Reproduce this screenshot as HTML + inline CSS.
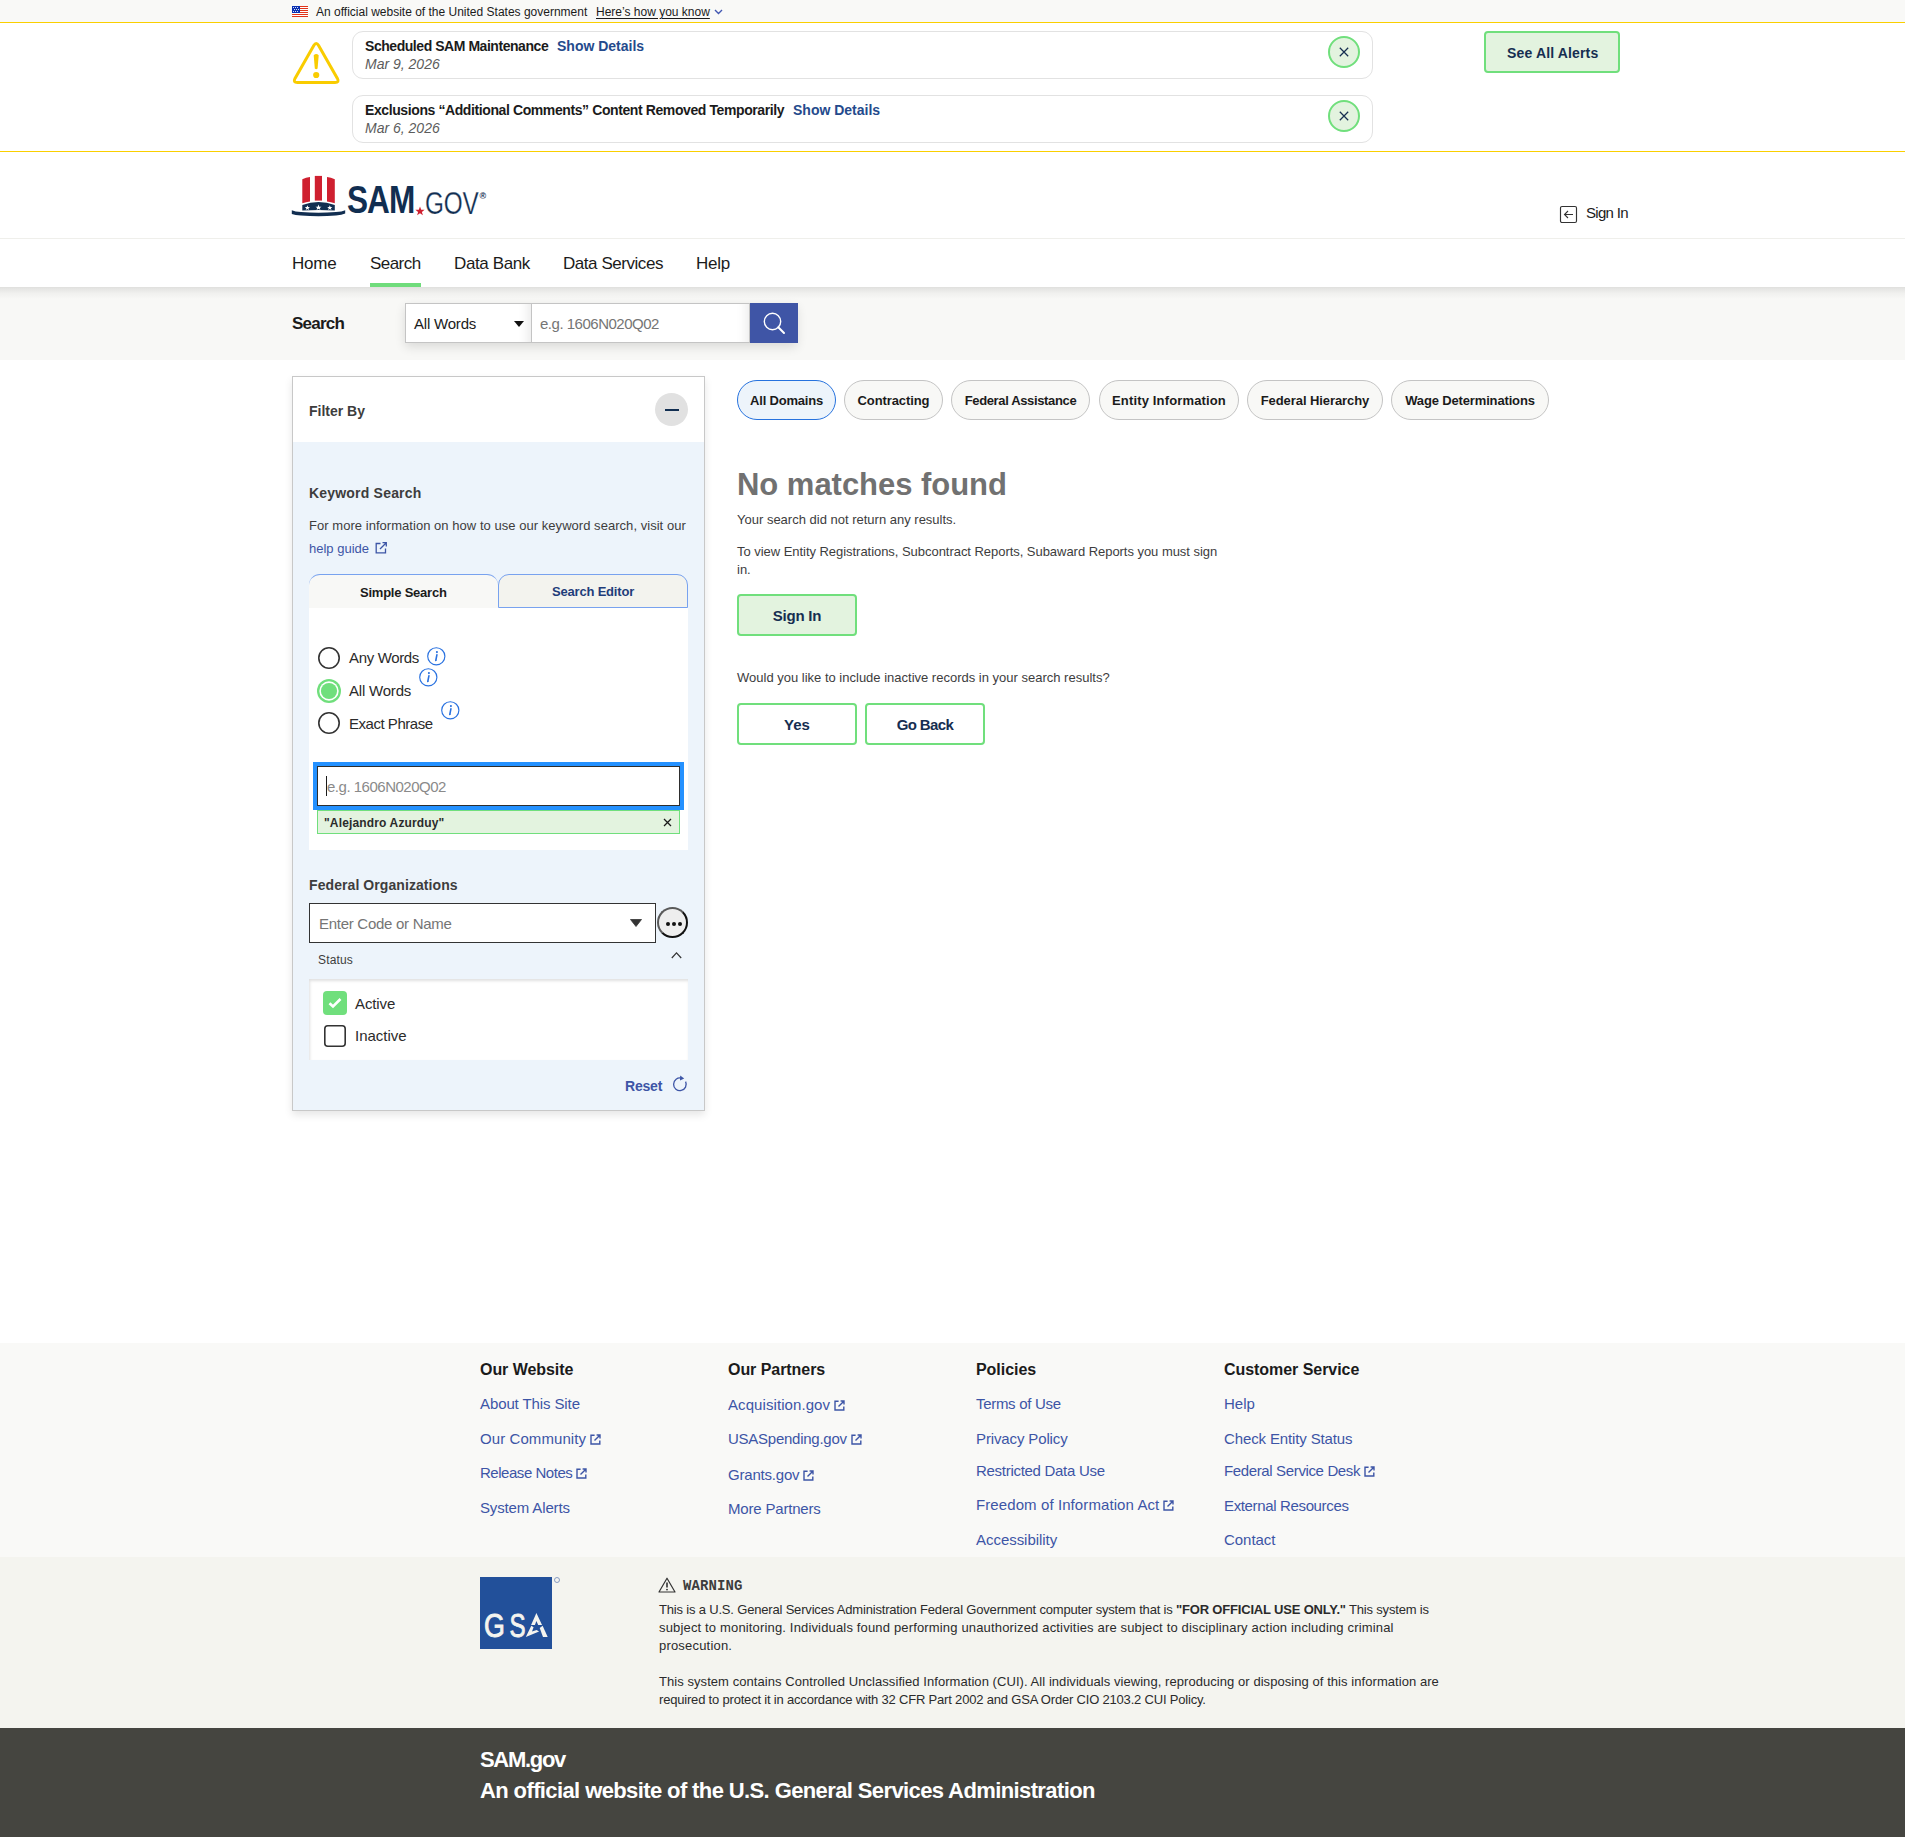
<!DOCTYPE html>
<html><head><meta charset="utf-8"><title>SAM.gov | Search</title>
<style>
html,body{margin:0;padding:0;}
body{width:1905px;height:1837px;position:relative;overflow:hidden;background:#fff;font-family:"Liberation Sans",sans-serif;color:#1b1b1b;}
.b{position:absolute;}
.t{position:absolute;white-space:nowrap;}
</style></head><body>
<div class="b" style="left:0px;top:0px;width:1905px;height:22px;background:#f9f9f7"></div>
<div class="b" style="left:0px;top:22px;width:1905px;height:1px;background:#facf00"></div>
<div class="b" style="left:0px;top:151px;width:1905px;height:1px;background:#facf00"></div>
<div class="b" style="left:0px;top:238px;width:1905px;height:1px;background:#efefeb"></div>
<div class="b" style="left:0px;top:287px;width:1905px;height:73px;background:linear-gradient(#dfdfdd 0px,#e6e6e4 2px,#f0f0ee 6px,#f8f8f6 12px)"></div>
<div class="b" style="left:0px;top:1343px;width:1905px;height:214px;background:#f9f9f7"></div>
<div class="b" style="left:0px;top:1557px;width:1905px;height:171px;background:#f4f4ef"></div>
<div class="b" style="left:0px;top:1728px;width:1905px;height:109px;background:#454540"></div>
<svg class="b" style="left:292px;top:6px" width="16" height="11" viewBox="0 0 16 11" shape-rendering="crispEdges">
<rect width="16" height="11" fill="#fff"/>
<g fill="#e1331a"><rect x="0" y="0" width="16" height="1"/><rect x="0" y="2" width="16" height="1"/><rect x="0" y="4" width="16" height="1"/><rect x="0" y="6" width="16" height="1"/><rect x="0" y="8" width="16" height="1"/><rect x="0" y="10" width="16" height="1"/></g>
<rect x="0" y="0" width="8" height="7" fill="#0b31b3"/>
</svg>
<svg class="b" style="left:292px;top:6px" width="16" height="11" viewBox="0 0 16 11">
<g fill="#fff"><circle cx="1.5" cy="1.5" r=".55"/><circle cx="3.5" cy="1.5" r=".55"/><circle cx="5.5" cy="1.5" r=".55"/><circle cx="2.5" cy="3.5" r=".55"/><circle cx="4.5" cy="3.5" r=".55"/><circle cx="6.5" cy="3.5" r=".55"/><circle cx="1.5" cy="5.5" r=".55"/><circle cx="3.5" cy="5.5" r=".55"/><circle cx="5.5" cy="5.5" r=".55"/></g></svg>
<div class="t " style="left:316px;top:4.85px;font-size:12px;line-height:14px;color:#1b1b1b;">An official website of the United States government</div>
<div class="t " style="left:596px;top:4.85px;font-size:12px;line-height:14px;color:#1b1b1b;text-decoration:underline;text-underline-offset:2px;">Here’s how you know</div>
<svg class="b" style="left:714px;top:9px" width="9" height="6" viewBox="0 0 9 6"><path d="M1 1 L4.5 4.5 L8 1" fill="none" stroke="#4257b2" stroke-width="1.4"/></svg>
<svg class="b" style="left:292px;top:41px" width="49" height="44" viewBox="0 0 49 44">
<path d="M21.8 4.6 Q24.2 0.4 26.6 4.6 L45.4 37.4 Q47.6 41.5 43 41.5 L5.4 41.5 Q0.8 41.5 3 37.4 Z" fill="none" stroke="#f9cc00" stroke-width="3" stroke-linejoin="round"/>
<path d="M21.7 14.2 Q24.2 11.8 26.7 14.2 L25.6 27.5 Q24.2 28.8 22.8 27.5 Z" fill="#f9cc00"/>
<circle cx="24.2" cy="34" r="3.1" fill="#f9cc00"/></svg>
<div class="b" style="left:352px;top:31px;width:1019px;height:46px;border:1px solid #e2e2e2;border-radius:11px;background:#fff"></div>
<div class="t " style="left:365px;top:37.66px;font-size:14px;line-height:17px;font-weight:700;color:#1b1b1b;letter-spacing:-0.45px;">Scheduled SAM Maintenance</div>
<div class="t " style="left:557px;top:37.66px;font-size:14px;line-height:17px;font-weight:700;color:#244a8c;">Show Details</div>
<div class="t " style="left:365px;top:55.66px;font-size:14px;line-height:17px;color:#5c5c5c;font-style:italic;">Mar 9, 2026</div>
<div class="b" style="left:1328px;top:36px;width:28px;height:28px;border:2px solid #70df7c;border-radius:50%;background:#e3f3df"><svg style="position:absolute;left:9px;top:9px" width="10" height="10" viewBox="0 0 10 10"><path d="M0.8 0.8L9.2 9.2M9.2 0.8L0.8 9.2" stroke="#162e51" stroke-width="1.25"/></svg></div>
<div class="b" style="left:352px;top:95px;width:1019px;height:46px;border:1px solid #e2e2e2;border-radius:11px;background:#fff"></div>
<div class="t " style="left:365px;top:101.66px;font-size:14px;line-height:17px;font-weight:700;color:#1b1b1b;letter-spacing:-0.4px;">Exclusions “Additional Comments” Content Removed Temporarily</div>
<div class="t " style="left:793px;top:101.66px;font-size:14px;line-height:17px;font-weight:700;color:#244a8c;">Show Details</div>
<div class="t " style="left:365px;top:119.66px;font-size:14px;line-height:17px;color:#5c5c5c;font-style:italic;">Mar 6, 2026</div>
<div class="b" style="left:1328px;top:100px;width:28px;height:28px;border:2px solid #70df7c;border-radius:50%;background:#e3f3df"><svg style="position:absolute;left:9px;top:9px" width="10" height="10" viewBox="0 0 10 10"><path d="M0.8 0.8L9.2 9.2M9.2 0.8L0.8 9.2" stroke="#162e51" stroke-width="1.25"/></svg></div>
<div class="b" style="left:1484px;top:31px;width:132px;height:38px;border:2px solid #70df7c;border-radius:4px;background:#e3f3df"></div>
<div class="t " style="left:1507px;top:44.66px;font-size:14px;line-height:17px;font-weight:700;color:#162e51;letter-spacing:0.15px;">See All Alerts</div>
<svg class="b" style="left:291px;top:175px" width="56" height="42" viewBox="0 0 56 42">
<g fill="#cf2030">
<path d="M11.3 4.2 Q15 2.6 19 2.1 L19 26.4 Q15 27 11.3 28.2 Z"/>
<path d="M23.8 0.9 L31 0.9 L31 25.6 L23.8 25.6 Z"/>
<path d="M36 2.1 Q40 2.6 43.8 4.2 L43.8 28.2 Q40 27 36 26.4 Z"/>
</g>
<path d="M11.3 30 Q27.5 23.8 43.8 30 L43.8 35.6 Q27.5 34.6 11.3 35.6 Z" fill="#112e51"/>
<g fill="#fff"><path d="M16.4 30.3L17.1 32.1L19 32.1L17.5 33.2L18.1 35L16.4 33.9L14.7 35L15.3 33.2L13.8 32.1L15.7 32.1Z"/><path d="M27.5 29.6L28.3 31.7L30.5 31.7L28.8 33L29.4 35L27.5 33.8L25.6 35L26.2 33L24.5 31.7L26.7 31.7Z"/><path d="M38.8 30.3L39.5 32.1L41.4 32.1L39.9 33.2L40.5 35L38.8 33.9L37.1 35L37.7 33.2L36.2 32.1L38.1 32.1Z"/></g>
<path d="M0.8 35.2 Q4 36.6 10 37.1 Q27.5 38.3 45 37.1 Q51 36.6 54.2 35.2 L54.2 38.6 Q51 40.2 45 40.6 Q27.5 41.8 10 40.6 Q4 40.2 0.8 38.9 Z" fill="#112e51"/>
</svg>
<div class="t " style="left:347px;top:176.00px;font-size:39px;line-height:47px;font-weight:700;color:#112e51;letter-spacing:-1.2px;transform:scaleX(0.81);transform-origin:left;">SAM</div>
<svg class="b" style="left:415px;top:206px" width="10" height="10" viewBox="0 0 10 10"><path d="M5 0.5L6.2 3.8L9.6 3.8L6.9 5.9L7.9 9.3L5 7.2L2.1 9.3L3.1 5.9L0.4 3.8L3.8 3.8Z" fill="#cf2030"/></svg>
<div class="t " style="left:425px;top:184.77px;font-size:31px;line-height:37px;color:#112e51;letter-spacing:-0.3px;transform:scaleX(0.785);transform-origin:left;-webkit-text-stroke:0.25px #fff;">GOV</div>
<div class="t " style="left:479.5px;top:191.39px;font-size:9px;line-height:11px;font-weight:700;color:#112e51;">®</div>
<svg class="b" style="left:1559px;top:205px" width="19" height="19" viewBox="0 0 19 19"><rect x="1.5" y="1.5" width="16" height="16" rx="1.5" fill="none" stroke="#333" stroke-width="1.15"/><path d="M14 9.5H5.5M9 6L5.5 9.5L9 13" fill="none" stroke="#333" stroke-width="1.1"/></svg>
<div class="t " style="left:1586px;top:203.81px;font-size:15px;line-height:18px;color:#1b1b1b;letter-spacing:-0.7px;">Sign In</div>
<div class="t " style="left:292px;top:254.12px;font-size:17px;line-height:20px;color:#1b1b1b;letter-spacing:-0.2px;">Home</div>
<div class="t " style="left:370px;top:254.12px;font-size:17px;line-height:20px;color:#1b1b1b;letter-spacing:-0.55px;">Search</div>
<div class="t " style="left:454px;top:254.12px;font-size:17px;line-height:20px;color:#1b1b1b;letter-spacing:-0.38px;">Data Bank</div>
<div class="t " style="left:563px;top:254.12px;font-size:17px;line-height:20px;color:#1b1b1b;letter-spacing:-0.45px;">Data Services</div>
<div class="t " style="left:696px;top:254.12px;font-size:17px;line-height:20px;color:#1b1b1b;letter-spacing:-0.24px;">Help</div>
<div class="b" style="left:370px;top:283px;width:51px;height:4px;background:#6fdc7b"></div>
<div class="t " style="left:292px;top:314.12px;font-size:17px;line-height:20px;font-weight:700;color:#1b1b1b;letter-spacing:-0.78px;">Search</div>
<div class="b" style="left:405px;top:303px;width:392px;height:40px;box-shadow:0 4px 10px rgba(0,0,0,0.12)"></div>
<div class="b" style="left:531px;top:303px;width:218px;height:38px;background:#fff;border:1px solid #c4c4c4;border-left:none;box-shadow:inset -14px 0 12px -12px rgba(0,0,0,0.09)"></div>
<div class="b" style="left:405px;top:303px;width:125px;height:38px;background:#fff;border:1px solid #c4c4c4;box-shadow:inset -14px 0 12px -12px rgba(0,0,0,0.10)"></div>
<div class="t " style="left:414px;top:314.81px;font-size:15px;line-height:18px;color:#1b1b1b;letter-spacing:-0.2px;">All Words</div>
<svg class="b" style="left:514px;top:321px" width="10" height="6" viewBox="0 0 10 6"><path d="M0 0H10L5 6Z" fill="#111"/></svg>
<div class="t " style="left:540px;top:314.81px;font-size:15px;line-height:18px;color:#757575;letter-spacing:-0.49px;">e.g. 1606N020Q02</div>
<div class="b" style="left:750px;top:303px;width:48px;height:40px;background:#3f55a6"></div>
<svg class="b" style="left:750px;top:303px" width="48" height="40" viewBox="0 0 48 40"><circle cx="22.5" cy="18.5" r="8.2" fill="none" stroke="#fff" stroke-width="1.4"/><path d="M28.3 24.3L34 30" stroke="#fff" stroke-width="2" stroke-linecap="round"/></svg>
<div class="b" style="left:292px;top:376px;width:411px;height:733px;border:1px solid #c8c8c8;background:#edf4fb;box-shadow:0 4px 8px rgba(0,0,0,0.10)"></div>
<div class="b" style="left:293px;top:377px;width:411px;height:65px;background:#fff"></div>
<div class="t " style="left:309px;top:402.66px;font-size:14px;line-height:17px;font-weight:700;color:#3d3d3d;">Filter By</div>
<div class="b" style="left:655px;top:393px;width:33px;height:33px;background:#e1e1e1;border-radius:50%"><div style="position:absolute;left:10px;top:15.5px;width:14px;height:2px;background:#112e51"></div></div>
<div class="t " style="left:309px;top:484.66px;font-size:14px;line-height:17px;font-weight:700;color:#3d3d3d;letter-spacing:0.2px;">Keyword Search</div>
<div class="t " style="left:309px;top:517.51px;font-size:13px;line-height:16px;color:#3d3d3d;letter-spacing:0.04px;">For more information on how to use our keyword search, visit our</div>
<div class="t " style="left:309px;top:540.51px;font-size:13px;line-height:16px;color:#3d55a6;">help guide</div>
<svg class="b" style="left:375px;top:542px" width="13" height="12" viewBox="0 0 13 12"><path d="M5.5 1.5H1.2V10.8H10.5V6.5" fill="none" stroke="#3d55a6" stroke-width="1.3"/><path d="M5 7L11.3 0.7M7.5 0.7H11.3V4.5" fill="none" stroke="#3d55a6" stroke-width="1.3"/></svg>
<div class="b" style="left:309px;top:608px;width:379px;height:242px;background:#fff"></div>
<div class="b" style="left:309px;top:574px;width:189px;height:34px;background:#f8f8f6;border-top:1px solid #78a2ef;border-radius:11px 11px 0 0;box-sizing:border-box"></div>
<div class="t " style="left:360px;top:584.51px;font-size:13px;line-height:16px;font-weight:700;color:#1b1b1b;letter-spacing:-0.23px;">Simple Search</div>
<div class="b" style="left:498px;top:574px;width:190px;height:34px;background:#f3f3ee;border:1px solid #78a2ef;border-radius:11px 11px 0 0;box-sizing:border-box"></div>
<div class="t " style="left:552px;top:583.51px;font-size:13px;line-height:16px;font-weight:700;color:#1f3d7a;letter-spacing:-0.19px;">Search Editor</div>
<svg class="b" style="left:318px;top:647px" width="22" height="22" viewBox="0 0 22 22"><circle cx="11" cy="11" r="10.2" fill="#fff" stroke="#333" stroke-width="1.6"/></svg>
<svg class="b" style="left:317px;top:679px" width="24" height="24" viewBox="0 0 24 24"><circle cx="12" cy="12" r="12" fill="#70df7c"/><circle cx="12" cy="12" r="9.7" fill="#fff"/><circle cx="12" cy="12" r="8.1" fill="#70df7c"/></svg>
<svg class="b" style="left:318px;top:712px" width="22" height="22" viewBox="0 0 22 22"><circle cx="11" cy="11" r="10.2" fill="#fff" stroke="#333" stroke-width="1.6"/></svg>
<div class="t " style="left:349px;top:648.81px;font-size:15px;line-height:18px;color:#2b2b2b;letter-spacing:-0.34px;">Any Words</div>
<div class="t " style="left:349px;top:681.81px;font-size:15px;line-height:18px;color:#2b2b2b;letter-spacing:-0.2px;">All Words</div>
<div class="t " style="left:349px;top:714.81px;font-size:15px;line-height:18px;color:#2b2b2b;letter-spacing:-0.47px;">Exact Phrase</div>
<svg class="b" style="left:427px;top:647px" width="19" height="19" viewBox="0 0 19 19"><circle cx="9.3" cy="9.3" r="8.6" fill="none" stroke="#2a72e0" stroke-width="1.15"/><path d="M9.9 7.8L8.8 13.3" stroke="#2a72e0" stroke-width="1.6" stroke-linecap="round"/><path d="M8.3 13.9L9.6 13.1" stroke="#2a72e0" stroke-width="1"/><circle cx="9.9" cy="5.1" r="1.05" fill="#2a72e0"/></svg>
<svg class="b" style="left:419px;top:668px" width="19" height="19" viewBox="0 0 19 19"><circle cx="9.3" cy="9.3" r="8.6" fill="none" stroke="#2a72e0" stroke-width="1.15"/><path d="M9.9 7.8L8.8 13.3" stroke="#2a72e0" stroke-width="1.6" stroke-linecap="round"/><path d="M8.3 13.9L9.6 13.1" stroke="#2a72e0" stroke-width="1"/><circle cx="9.9" cy="5.1" r="1.05" fill="#2a72e0"/></svg>
<svg class="b" style="left:441px;top:701px" width="19" height="19" viewBox="0 0 19 19"><circle cx="9.3" cy="9.3" r="8.6" fill="none" stroke="#2a72e0" stroke-width="1.15"/><path d="M9.9 7.8L8.8 13.3" stroke="#2a72e0" stroke-width="1.6" stroke-linecap="round"/><path d="M8.3 13.9L9.6 13.1" stroke="#2a72e0" stroke-width="1"/><circle cx="9.9" cy="5.1" r="1.05" fill="#2a72e0"/></svg>
<div class="b" style="left:313px;top:762px;width:371px;height:48px;background:#2491ff"></div>
<div class="b" style="left:317px;top:766px;width:361px;height:38px;background:#fff;border:1px solid #2e2e2e"></div>
<div class="b" style="left:326px;top:776px;width:1px;height:20px;background:#1b1b1b"></div>
<div class="t " style="left:327px;top:777.81px;font-size:15px;line-height:18px;color:#8a8a8a;letter-spacing:-0.49px;">e.g. 1606N020Q02</div>
<div class="b" style="left:317px;top:810px;width:361px;height:22px;background:#e3f3df;border:1px solid #70df7c"></div>
<div class="t " style="left:324px;top:815.85px;font-size:12px;line-height:14px;font-weight:700;color:#2b2b2b;letter-spacing:0.15px;">"Alejandro Azurduy"</div>
<svg class="b" style="left:663px;top:818px" width="9" height="9" viewBox="0 0 9 9"><path d="M1 1L8 8M8 1L1 8" stroke="#1b1b1b" stroke-width="1.3"/></svg>
<div class="t " style="left:309px;top:876.66px;font-size:14px;line-height:17px;font-weight:700;color:#3d3d3d;letter-spacing:0.08px;">Federal Organizations</div>
<div class="b" style="left:309px;top:903px;width:345px;height:38px;background:#fff;border:1px solid #333"></div>
<div class="t " style="left:319px;top:914.81px;font-size:15px;line-height:18px;color:#757575;letter-spacing:-0.28px;">Enter Code or Name</div>
<svg class="b" style="left:630px;top:919px" width="12" height="8" viewBox="0 0 12 8"><path d="M0.5 0.5H11.5L6 7.5Z" fill="#333" stroke="#333" stroke-width="0.8" stroke-linejoin="round"/></svg>
<div class="b" style="left:657px;top:907px;width:27px;height:27px;background:#eee;border:2px solid #111;border-color:#5a5a5a #111 #111 #5a5a5a;border-radius:50%"><div style="position:absolute;left:7px;top:13px;width:4px;height:4px;border-radius:50%;background:#111;box-shadow:6px 0 0 #111,12px 0 0 #111"></div></div>
<div class="t " style="left:318px;top:952.85px;font-size:12px;line-height:14px;color:#3d3d3d;letter-spacing:0.16px;">Status</div>
<svg class="b" style="left:671px;top:951px" width="11" height="8" viewBox="0 0 11 8"><path d="M0.8 7L5.5 1.8L10.2 7" fill="none" stroke="#333" stroke-width="1.2"/></svg>
<div class="b" style="left:309px;top:979px;width:379px;height:81px;background:#fff;box-shadow:inset 1px 2px 3px rgba(0,0,0,0.12)"></div>
<div class="b" style="left:323px;top:991px;width:24px;height:24px;background:#70df7c;border-radius:4px"><svg style="position:absolute;left:5px;top:6px" width="14" height="12" viewBox="0 0 14 12"><path d="M1.5 6.2L5 9.5L12.5 2" fill="none" stroke="#fff" stroke-width="2.6"/></svg></div>
<svg class="b" style="left:324px;top:1025px" width="22" height="22" viewBox="0 0 22 22"><rect x="0.8" y="0.8" width="20.4" height="20.4" rx="3" fill="#fff" stroke="#333" stroke-width="1.6"/></svg>
<div class="t " style="left:355px;top:994.81px;font-size:15px;line-height:18px;color:#2b2b2b;letter-spacing:-0.1px;">Active</div>
<div class="t " style="left:355px;top:1026.81px;font-size:15px;line-height:18px;color:#2b2b2b;">Inactive</div>
<div class="t " style="left:625px;top:1077.66px;font-size:14px;line-height:17px;font-weight:700;color:#3d55a6;letter-spacing:-0.19px;">Reset</div>
<svg class="b" style="left:671px;top:1075px" width="17" height="17" viewBox="0 0 17 17"><path d="M10.5 3.2A6.3 6.3 0 1 0 14.6 6.6" fill="none" stroke="#3d55a6" stroke-width="1.3"/><path d="M9.2 0.6L13.2 3.4L9 5.6Z" fill="#3d55a6"/></svg>
<div class="b" style="left:737px;top:380px;width:97px;height:38px;border:1px solid #2672de;background:#edf4fb;border-radius:20px"></div>
<div class="t" style="left:737px;top:394.00px;width:99px;text-align:center;font-size:13px;line-height:13px;font-weight:700;color:#1b1b1b;letter-spacing:-0.2px">All Domains</div>
<div class="b" style="left:844px;top:380px;width:97px;height:38px;border:1px solid #c4c4c4;background:#f8f8f6;border-radius:20px"></div>
<div class="t" style="left:844px;top:394.00px;width:99px;text-align:center;font-size:13px;line-height:13px;font-weight:700;color:#1b1b1b;letter-spacing:-0.1px">Contracting</div>
<div class="b" style="left:951px;top:380px;width:137px;height:38px;border:1px solid #c4c4c4;background:#f8f8f6;border-radius:20px"></div>
<div class="t" style="left:951px;top:394.00px;width:139px;text-align:center;font-size:13px;line-height:13px;font-weight:700;color:#1b1b1b;letter-spacing:-0.36px">Federal Assistance</div>
<div class="b" style="left:1099px;top:380px;width:138px;height:38px;border:1px solid #c4c4c4;background:#f8f8f6;border-radius:20px"></div>
<div class="t" style="left:1099px;top:394.00px;width:140px;text-align:center;font-size:13px;line-height:13px;font-weight:700;color:#1b1b1b;letter-spacing:0.15px">Entity Information</div>
<div class="b" style="left:1247px;top:380px;width:134px;height:38px;border:1px solid #c4c4c4;background:#f8f8f6;border-radius:20px"></div>
<div class="t" style="left:1247px;top:394.00px;width:136px;text-align:center;font-size:13px;line-height:13px;font-weight:700;color:#1b1b1b;letter-spacing:-0.08px">Federal Hierarchy</div>
<div class="b" style="left:1391px;top:380px;width:156px;height:38px;border:1px solid #c4c4c4;background:#f8f8f6;border-radius:20px"></div>
<div class="t" style="left:1391px;top:394.00px;width:158px;text-align:center;font-size:13px;line-height:13px;font-weight:700;color:#1b1b1b;letter-spacing:-0.15px">Wage Determinations</div>
<div class="t " style="left:737px;top:465.77px;font-size:31px;line-height:37px;font-weight:700;color:#717171;letter-spacing:-0.03px;">No matches found</div>
<div class="t " style="left:737px;top:511.51px;font-size:13px;line-height:16px;color:#3d3d3d;">Your search did not return any results.</div>
<div class="t " style="left:737px;top:543.51px;font-size:13px;line-height:16px;color:#3d3d3d;letter-spacing:-0.04px;">To view Entity Registrations, Subcontract Reports, Subaward Reports you must sign</div>
<div class="t " style="left:737px;top:561.51px;font-size:13px;line-height:16px;color:#3d3d3d;">in.</div>
<div class="b" style="left:737px;top:594px;width:116px;height:38px;border:2px solid #70df7c;border-radius:4px;background:#e3f3df"></div>
<div class="t " style="left:737px;top:606.81px;font-size:15px;line-height:18px;font-weight:700;color:#162e51;letter-spacing:-0.2px;width:120px;text-align:center;">Sign In</div>
<div class="t " style="left:737px;top:669.51px;font-size:13px;line-height:16px;color:#3d3d3d;">Would you like to include inactive records in your search results?</div>
<div class="b" style="left:737px;top:703px;width:116px;height:38px;border:2px solid #70df7c;border-radius:4px;background:#fff"></div>
<div class="t " style="left:737px;top:715.81px;font-size:15px;line-height:18px;font-weight:700;color:#162e51;width:120px;text-align:center;">Yes</div>
<div class="b" style="left:865px;top:703px;width:116px;height:38px;border:2px solid #70df7c;border-radius:4px;background:#fff"></div>
<div class="t " style="left:865px;top:715.81px;font-size:15px;line-height:18px;font-weight:700;color:#162e51;letter-spacing:-0.6px;width:120px;text-align:center;">Go Back</div>
<div class="t " style="left:480px;top:1359.97px;font-size:16px;line-height:19px;font-weight:700;color:#1b1b1b;letter-spacing:-0.05px;">Our Website</div>
<div class="t " style="left:480px;top:1394.81px;font-size:15px;line-height:18px;color:#3d55a6;"><span style="letter-spacing:-0.104px">About This Site</span></div>
<div class="t " style="left:480px;top:1429.81px;font-size:15px;line-height:18px;color:#3d55a6;"><span style="letter-spacing:0.081px">Our Community</span><svg style="display:inline-block;vertical-align:-1px;margin-left:4px" width="11" height="11" viewBox="0 0 11 11"><path d="M4.6 1.2H1V10H9.8V6.4" fill="none" stroke="#3d55a6" stroke-width="1.4"/><path d="M4.5 6.5L9.8 1.2M6.6 1H10V4.4" fill="none" stroke="#3d55a6" stroke-width="1.4"/></svg></div>
<div class="t " style="left:480px;top:1463.81px;font-size:15px;line-height:18px;color:#3d55a6;"><span style="letter-spacing:-0.466px">Release Notes</span><svg style="display:inline-block;vertical-align:-1px;margin-left:4px" width="11" height="11" viewBox="0 0 11 11"><path d="M4.6 1.2H1V10H9.8V6.4" fill="none" stroke="#3d55a6" stroke-width="1.4"/><path d="M4.5 6.5L9.8 1.2M6.6 1H10V4.4" fill="none" stroke="#3d55a6" stroke-width="1.4"/></svg></div>
<div class="t " style="left:480px;top:1498.81px;font-size:15px;line-height:18px;color:#3d55a6;"><span style="letter-spacing:-0.142px">System Alerts</span></div>
<div class="t " style="left:728px;top:1359.97px;font-size:16px;line-height:19px;font-weight:700;color:#1b1b1b;letter-spacing:-0.05px;">Our Partners</div>
<div class="t " style="left:728px;top:1395.81px;font-size:15px;line-height:18px;color:#3d55a6;"><span style="letter-spacing:0.078px">Acquisition.gov</span><svg style="display:inline-block;vertical-align:-1px;margin-left:4px" width="11" height="11" viewBox="0 0 11 11"><path d="M4.6 1.2H1V10H9.8V6.4" fill="none" stroke="#3d55a6" stroke-width="1.4"/><path d="M4.5 6.5L9.8 1.2M6.6 1H10V4.4" fill="none" stroke="#3d55a6" stroke-width="1.4"/></svg></div>
<div class="t " style="left:728px;top:1429.81px;font-size:15px;line-height:18px;color:#3d55a6;"><span style="letter-spacing:-0.257px">USASpending.gov</span><svg style="display:inline-block;vertical-align:-1px;margin-left:4px" width="11" height="11" viewBox="0 0 11 11"><path d="M4.6 1.2H1V10H9.8V6.4" fill="none" stroke="#3d55a6" stroke-width="1.4"/><path d="M4.5 6.5L9.8 1.2M6.6 1H10V4.4" fill="none" stroke="#3d55a6" stroke-width="1.4"/></svg></div>
<div class="t " style="left:728px;top:1465.81px;font-size:15px;line-height:18px;color:#3d55a6;"><span style="letter-spacing:-0.197px">Grants.gov</span><svg style="display:inline-block;vertical-align:-1px;margin-left:4px" width="11" height="11" viewBox="0 0 11 11"><path d="M4.6 1.2H1V10H9.8V6.4" fill="none" stroke="#3d55a6" stroke-width="1.4"/><path d="M4.5 6.5L9.8 1.2M6.6 1H10V4.4" fill="none" stroke="#3d55a6" stroke-width="1.4"/></svg></div>
<div class="t " style="left:728px;top:1499.81px;font-size:15px;line-height:18px;color:#3d55a6;"><span style="letter-spacing:-0.187px">More Partners</span></div>
<div class="t " style="left:976px;top:1359.97px;font-size:16px;line-height:19px;font-weight:700;color:#1b1b1b;letter-spacing:-0.05px;">Policies</div>
<div class="t " style="left:976px;top:1394.81px;font-size:15px;line-height:18px;color:#3d55a6;"><span style="letter-spacing:-0.305px">Terms of Use</span></div>
<div class="t " style="left:976px;top:1429.81px;font-size:15px;line-height:18px;color:#3d55a6;"><span style="letter-spacing:-0.128px">Privacy Policy</span></div>
<div class="t " style="left:976px;top:1461.81px;font-size:15px;line-height:18px;color:#3d55a6;"><span style="letter-spacing:-0.29px">Restricted Data Use</span></div>
<div class="t " style="left:976px;top:1495.81px;font-size:15px;line-height:18px;color:#3d55a6;"><span style="letter-spacing:0.095px">Freedom of Information Act</span><svg style="display:inline-block;vertical-align:-1px;margin-left:4px" width="11" height="11" viewBox="0 0 11 11"><path d="M4.6 1.2H1V10H9.8V6.4" fill="none" stroke="#3d55a6" stroke-width="1.4"/><path d="M4.5 6.5L9.8 1.2M6.6 1H10V4.4" fill="none" stroke="#3d55a6" stroke-width="1.4"/></svg></div>
<div class="t " style="left:976px;top:1530.81px;font-size:15px;line-height:18px;color:#3d55a6;"><span style="letter-spacing:-0.041px">Accessibility</span></div>
<div class="t " style="left:1224px;top:1359.97px;font-size:16px;line-height:19px;font-weight:700;color:#1b1b1b;letter-spacing:-0.05px;">Customer Service</div>
<div class="t " style="left:1224px;top:1394.81px;font-size:15px;line-height:18px;color:#3d55a6;"><span style="letter-spacing:-0.02px">Help</span></div>
<div class="t " style="left:1224px;top:1429.81px;font-size:15px;line-height:18px;color:#3d55a6;"><span style="letter-spacing:-0.128px">Check Entity Status</span></div>
<div class="t " style="left:1224px;top:1461.81px;font-size:15px;line-height:18px;color:#3d55a6;"><span style="letter-spacing:-0.363px">Federal Service Desk</span><svg style="display:inline-block;vertical-align:-1px;margin-left:4px" width="11" height="11" viewBox="0 0 11 11"><path d="M4.6 1.2H1V10H9.8V6.4" fill="none" stroke="#3d55a6" stroke-width="1.4"/><path d="M4.5 6.5L9.8 1.2M6.6 1H10V4.4" fill="none" stroke="#3d55a6" stroke-width="1.4"/></svg></div>
<div class="t " style="left:1224px;top:1496.81px;font-size:15px;line-height:18px;color:#3d55a6;"><span style="letter-spacing:-0.353px">External Resources</span></div>
<div class="t " style="left:1224px;top:1530.81px;font-size:15px;line-height:18px;color:#3d55a6;"><span style="letter-spacing:-0.034px">Contact</span></div>
<svg class="b" style="left:480px;top:1577px" width="82" height="73" viewBox="0 0 82 73">
<rect width="72" height="72" fill="#22509a"/>
<text x="4" y="60.2" font-family="Liberation Sans" font-size="33.5" fill="#f4f4ef" stroke="#f4f4ef" stroke-width="0.9" transform="translate(4 0) scale(0.8 1) translate(-4 0)">G</text>
<text x="36.5" y="60.2" font-family="Liberation Sans" font-size="33.5" fill="#f4f4ef" stroke="#f4f4ef" stroke-width="0.9" transform="translate(29.5 0) scale(0.72 1) translate(-36.5 0)">S</text>
<g fill="#f4f4ef">
<path d="M56.4 35.9 L62.05 48 L58.2 48 L56.4 44.1 L54.9 48 L51.1 48 Z"/>
<path d="M59.7 50.9 L62.6 48.7 L67.7 60 L63 60 Z"/>
<path d="M51.3 48.7 L53.6 50.2 L52 54.6 L56.6 52.9 L59.1 54.4 L45.8 60 Z"/>
</g>
<circle cx="77" cy="3" r="2.5" fill="none" stroke="#6d86b8" stroke-width="0.8"/>
</svg>
<svg class="b" style="left:658px;top:1577px" width="18" height="16" viewBox="0 0 18 16"><path d="M9 1.2L17 15H1Z" fill="none" stroke="#333" stroke-width="1.2" stroke-linejoin="round"/><path d="M9 5.5V10.5" stroke="#333" stroke-width="1.6"/><circle cx="9" cy="12.6" r=".9" fill="#333"/></svg>
<div class="t " style="left:683px;top:1577.66px;font-size:14px;line-height:17px;font-weight:700;color:#3d3d3d;letter-spacing:0.1px;font-family:'Liberation Mono',monospace;">WARNING</div>
<div class="t " style="left:659px;top:1601.51px;font-size:13px;line-height:16px;color:#2b2b2b;letter-spacing:-0.18px;">This is a U.S. General Services Administration Federal Government computer system that is <b>"FOR OFFICIAL USE ONLY."</b> This system is</div>
<div class="t " style="left:659px;top:1619.51px;font-size:13px;line-height:16px;color:#2b2b2b;letter-spacing:0.16px;">subject to monitoring. Individuals found performing unauthorized activities are subject to disciplinary action including criminal</div>
<div class="t " style="left:659px;top:1637.51px;font-size:13px;line-height:16px;color:#2b2b2b;letter-spacing:0.19px;">prosecution.</div>
<div class="t " style="left:659px;top:1673.51px;font-size:13px;line-height:16px;color:#2b2b2b;letter-spacing:0.06px;">This system contains Controlled Unclassified Information (CUI). All individuals viewing, reproducing or disposing of this information are</div>
<div class="t " style="left:659px;top:1691.51px;font-size:13px;line-height:16px;color:#2b2b2b;letter-spacing:-0.19px;">required to protect it in accordance with 32 CFR Part 2002 and GSA Order CIO 2103.2 CUI Policy.</div>
<div class="t " style="left:480px;top:1747.39px;font-size:22px;line-height:26px;font-weight:700;color:#fff;letter-spacing:-1.3px;">SAM.gov</div>
<div class="t " style="left:480px;top:1778.39px;font-size:22px;line-height:26px;font-weight:700;color:#fff;letter-spacing:-0.61px;">An official website of the U.S. General Services Administration</div>
</body></html>
